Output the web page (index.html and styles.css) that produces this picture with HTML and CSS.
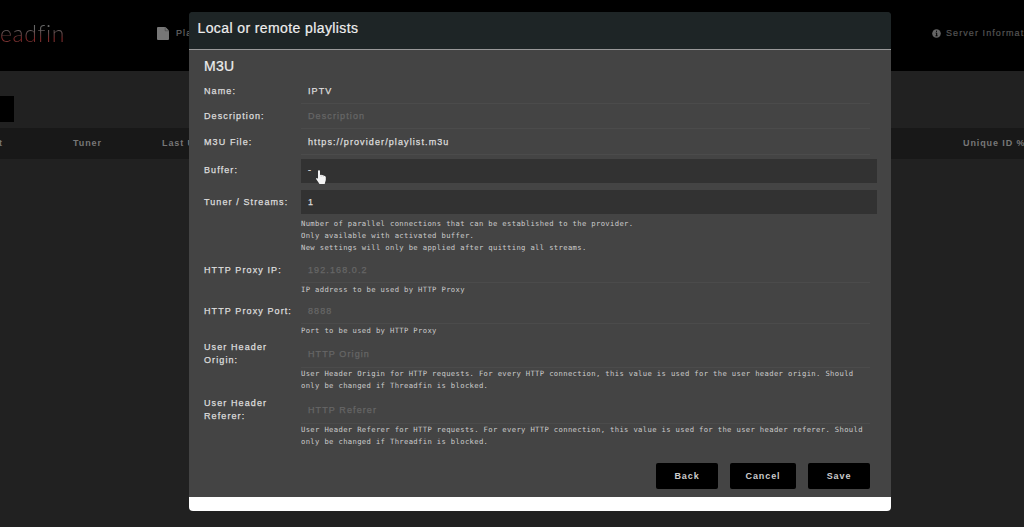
FILE: index.html
```html
<!DOCTYPE html>
<html lang="en">
<head>
<meta charset="utf-8">
<title>Threadfin</title>
<link rel="stylesheet" href="styles.css">
</head>
<body>
<div class="page">
  <header class="topbar">
    <span class="logo">eadfin</span>
    <span class="nav nav-playlist"><svg width="12" height="13" viewBox="0 0 12 13"><path d="M1 0h7.5L12 3.5V12a1 1 0 0 1-1 1H1a1 1 0 0 1-1-1V1a1 1 0 0 1 1-1z" fill="#777"/><path d="M8.2 0v3.8H12" stroke="#444" stroke-width=".6" fill="none"/></svg><span>Pla</span></span>
    <span class="nav nav-info"><svg width="9" height="9" viewBox="0 0 9 9"><circle cx="4.5" cy="4.5" r="4.3" fill="#666"/><path d="M4.5 1.7v1.1M3.7 4h1v2.8M3.5 6.8h2" stroke="#000" fill="none"/></svg><span>Server Informat</span></span>
  </header>
  <div class="toolbar"><span class="tool-button"></span></div>
  <div class="columns"><span class="col-first">t</span><span class="col-tuner">Tuner</span><span class="col-update">Last U</span><span class="col-id">Unique ID %</span></div>
</div>
<main class="modal">
  <h1 class="title">Local or remote playlists</h1>
  <section class="form">
    <h2 class="subtitle">M3U</h2>
    <div class="row name"><label>Name:</label><div class="input">IPTV</div></div>
    <div class="row description"><label>Description:</label><div class="input hint">Description</div></div>
    <div class="row file"><label>M3U File:</label><div class="input url">https://provider/playlist.m3u</div></div>
    <div class="row buffer"><label>Buffer:</label><div class="select">-</div></div>
    <div class="row tuner"><label>Tuner / Streams:</label><div class="select value">1</div></div>
    <p class="help help-tuner">Number of parallel connections that can be established to the provider.<br>Only available with activated buffer.<br>New settings will only be applied after quitting all streams.</p>
    <div class="row proxy"><label>HTTP Proxy IP:</label><div class="input hint">192.168.0.2</div></div>
    <p class="help help-ip">IP address to be used by HTTP Proxy</p>
    <div class="row proxy"><label>HTTP Proxy Port:</label><div class="input hint">8888</div></div>
    <p class="help help-port">Port to be used by HTTP Proxy</p>
    <div class="row header"><label>User Header<br>Origin:</label><div class="input hint">HTTP Origin</div></div>
    <p class="help help-origin">User Header Origin for HTTP requests. For every HTTP connection, this value is used for the user header origin. Should<br>only be changed if Threadfin is blocked.</p>
    <div class="row header"><label>User Header<br>Referer:</label><div class="input hint">HTTP Referer</div></div>
    <p class="help">User Header Referer for HTTP requests. For every HTTP connection, this value is used for the user header referer. Should<br>only be changed if Threadfin is blocked.</p>
    <div class="actions"><button>Back</button><button class="cancel">Cancel</button><button>Save</button></div>
  </section>
</main>
<svg class="cursor" width="10" height="14" viewBox="0 0 10 14"><path d="M2 1.2C2-.1 4-.1 4 1.2V5l1-.2 1 .3 1 .1 1 .5 1 .2.8 1V10L8.7 14H3.5L.3 9.3C-.3 8.2.7 7.3 2 8.8z" fill="#f4f4f4"/><path d="M5.2 5v2M7.3 5.5V7" stroke="#aaa" stroke-width=".4"/></svg>
</body>
</html>
```
FILE: styles.css
```css
* { box-sizing: border-box; }
body { margin: 0; width: 1024px; height: 527px; overflow: hidden; background: #212121; font-family: "Liberation Sans", Arial, sans-serif; font-size: 9px; letter-spacing: 1.1px; }
.page { width: 1024px; height: 527px; overflow: hidden; color: #777; }
.topbar { display: flex; align-items: center; height: 71px; padding-bottom: 5px; background: #000; white-space: nowrap; }
.topbar > *, .columns > * { flex-shrink: 0; }
.logo { width: 157px; font: 300 23px/28px Lato, sans-serif; letter-spacing: 0.6px; color: transparent; background: linear-gradient(#666 35%, #604040 56%, #882222 74%, #555 92%); background-clip: text; -webkit-background-clip: text; }
.nav { display: flex; align-items: center; color: #666; }
.nav-playlist { width: 775px; gap: 7px; -webkit-text-stroke: 0.2px; }
.nav-info { gap: 5px; color: #555; letter-spacing: 1.08px; -webkit-text-stroke: 0.2px; }
.toolbar { height: 57px; padding-top: 25px; }
.tool-button { display: block; width: 14px; height: 26px; background: #000; }
.columns { display: flex; align-items: center; height: 31px; padding-bottom: 2px; background: #181818; font-weight: bold; letter-spacing: 0.9px; white-space: nowrap; }
.col-first { width: 73px; text-indent: -1px; }
.col-tuner { width: 89px; }
.col-update { width: 801px; }
.modal { position: absolute; left: 189px; top: 12px; width: 702px; height: 499px; overflow: hidden; border-radius: 4px; background: linear-gradient(#1e2526 50%, #fff 50%); color: #ddd; }
.title { height: 38px; margin: 0; padding: 0 8.5px; border-bottom: 1px solid #999; background: #1e2526; color: #eee; font-size: 14px; font-weight: normal; line-height: 33px; letter-spacing: 0.4px; -webkit-text-stroke: 0.2px; }
.form { display: flex; flex-direction: column; height: 447px; padding: 0 14px 0 15px; background: #444; }
.subtitle { height: 28px; margin: 0; color: #eee; font-size: 14px; font-weight: normal; line-height: 33px; letter-spacing: 0.3px; -webkit-text-stroke: 0.2px; }
.row { display: grid; grid-template-columns: 97px 576px; align-items: center; height: 25px; white-space: nowrap; -webkit-text-stroke: 0.25px; }
.row label { line-height: 13px; }
.name { height: 26px; }
.file { height: 26px; }
.buffer { height: 31px; }
.tuner { height: 32px; }
.proxy { height: 24px; }
.input { height: 100%; margin-right: 7px; padding: 0 7px; border-bottom: 1px solid #4b4b4b; line-height: 24px; }
.hint { color: #666; }
.name .input, .file .input, .header .input { padding-top: 1px; }
.select { height: 24px; padding: 0 7px; background: #323232; line-height: 23px; }
.value { line-height: 25px; }
.help { margin: 0 0 0 97px; font-family: "DejaVu Sans Mono", monospace; font-size: 7.2px; line-height: 12px; letter-spacing: 0.355px; white-space: nowrap; color: #ccc; }
.help-tuner { margin-bottom: 4px; }
.help-ip { margin-bottom: 3px; padding-top: 2px; }
.help-port { margin-bottom: 4px; padding-top: 2px; }
.help-origin { margin-bottom: 5px; }
.header { height: 26px; }
.header label { padding-bottom: 1px; }
.header + .help { padding-top: 1px; }
.actions { display: flex; justify-content: flex-end; gap: 12px; margin-top: auto; padding: 0 7px 8px; }
button { width: 62px; height: 26px; padding: 0; border: 0; border-radius: 2px; background: #000; color: #ccc; font: bold 9px "Liberation Sans", Arial, sans-serif; letter-spacing: 0.9px; }
.cancel { width: 66px; }
.cursor { position: absolute; left: 316px; top: 170px; }
```
